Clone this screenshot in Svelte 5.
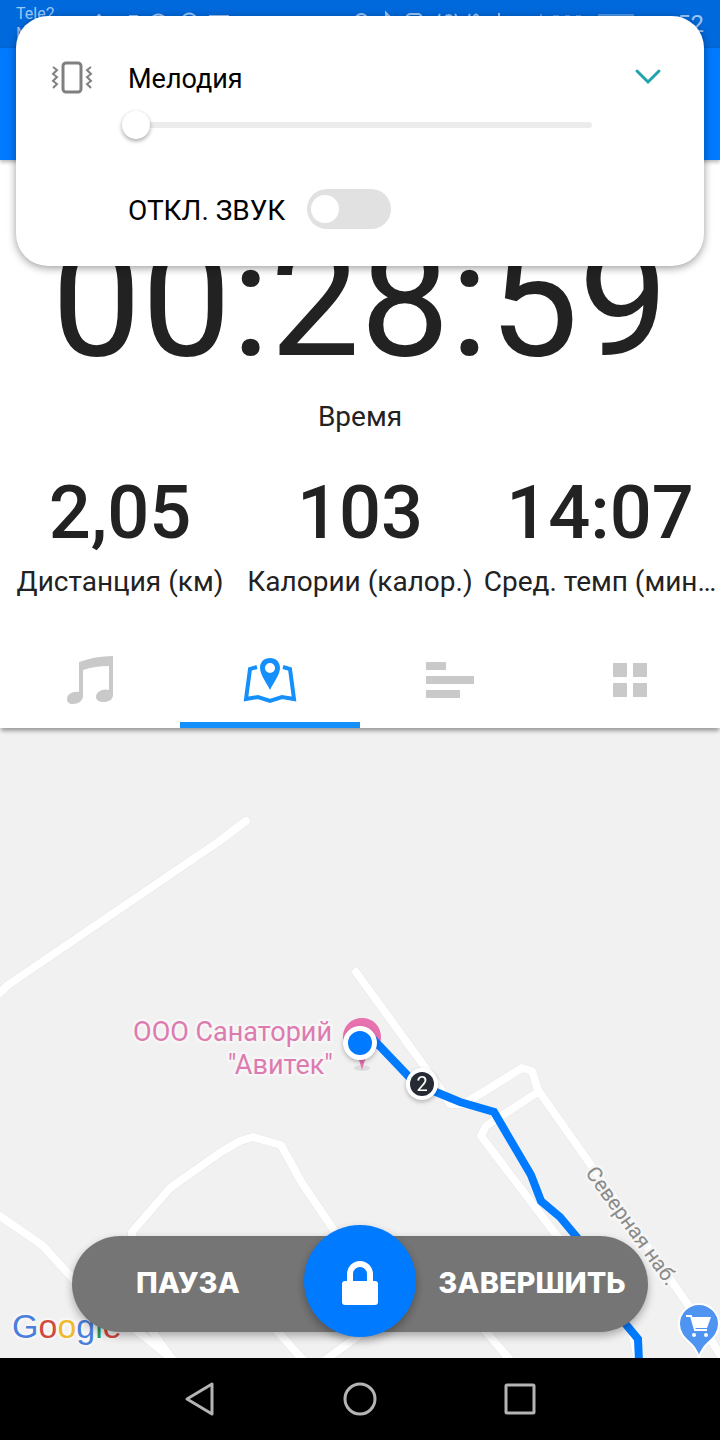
<script lang="ts">
  let volume = $state(0);
  let muted = $state(false);
  let activeTab = $state('map');

  const stats = [
    { value: '2,05', label: 'Дистанция (км)' },
    { value: '103', label: 'Калории (калор.)' },
    { value: '14:07', label: 'Сред. темп (мин…' }
  ];

  const tabs = [
    { id: 'music', name: 'Музыка' },
    { id: 'map', name: 'Карта' },
    { id: 'splits', name: 'Отрезки' },
    { id: 'more', name: 'Ещё' }
  ];

  const roads = [
    'M246 93 L218 114 L8 257 L-6 270',
    'M356 244 L440 360 L450 376 H464 L522 340 L532 343 L538 362 L612 467 L700 594 L726 636',
    'M538 364 L486 398 L481 408 L570 525 L632 604 L640 640',
    'M-6 484 L42 517 L76 554 L176 634',
    'M132 510 V504 L170 460 L221 424 L240 413 L253 409 L281 417 L302 455 L340 511',
    'M150 600 L174 634',
    'M278 604 L303 632 Q316 640 328 630 L358 608',
    'M486 604 L512 634'
  ];
  const route = 'M372 310 L412 352 L436 364 L460 374 L494 384 L531 447 L541 473 L560 489 L590 525 L624 594 L638 611 L639 634';
</script>

<div class="screen">
  <div class="status">
    <div class="carrier">Tele2<br />M</div>
    <svg class="peek" width="140" height="20" viewBox="0 0 140 20" aria-hidden="true">
      <path d="M5 17 L7 15 L9 17 M37 16 H46 M59 18 Q66 11 74 18 M90 18 Q97 9 105 18 M117 16 H137" />
    </svg>
    <svg class="peek right" width="284" height="20" viewBox="0 0 284 20" aria-hidden="true">
      <path d="M3 18 Q9 10 16 18 M34 19 V13 L39 18 M54 18 Q55 14 59 14 H66 Q69 14 70 18 M88 14 L85 19 M92 18 Q97 12 101 18 M103 14 L106 19 M118 14 L115 20 M121 18 Q124 11 127 18 M147 13 V18" />
      <path class="faint" d="M189 14 V18 M201 16 H207 M213 16 H218 M224 16 H229 M247 18 V15 H281 V18" />
    </svg>
    <div class="clock">52</div>
  </div>
  <header></header>

  <section class="timer">
    <div class="time">00:28:59</div>
    <div class="caption">Время</div>
  </section>

  <section class="stats">
    {#each stats as stat}
      <div class="stat">
        <div class="value">{stat.value}</div>
        <div class="label">{stat.label}</div>
      </div>
    {/each}
  </section>

  <nav class="tabs">
    {#each tabs as tab}
      <button
        class:active={activeTab === tab.id}
        aria-label={tab.name}
        onclick={() => (activeTab = tab.id)}
      >
        <svg width="60" height="60" viewBox="0 0 60 60" fill="currentColor">
          {#if tab.id === 'music'}
            <path d="M19 12 Q35 6 53 6 V45 C53 50 48 52 44 52 C39 52 36 50 36 47 C36 42 43 38 49 40 V16 Q35 16 23 20 V46 C23 51 18 54 13 54 C9 54 7 52 7 49 C7 44 13 41 19 42 Z" />
          {:else if tab.id === 'map'}
            <path
              d="M17 17 L10 19 L6 49 L18 47 L30 51 L42 47 L54 49 L50 19 L43 17"
              fill="none"
              stroke="currentColor"
              stroke-width="4"
            />
            <path
              fill-rule="evenodd"
              d="M30 8 C24 8 20 12 20 18 C20 25 28 35 30 40 C32 35 40 25 40 18 C40 12 36 8 30 8 Z M30 13 A5 5 0 1 1 30 23 A5 5 0 1 1 30 13 Z"
            />
          {:else if tab.id === 'splits'}
            <path d="M6 12 H26 V20 H6 Z M6 26 H54 V34 H6 Z M6 40 H40 V48 H6 Z" />
          {:else}
            <path d="M13 13 H27 V27 H13 Z M33 13 H47 V27 H33 Z M13 33 H27 V47 H13 Z M33 33 H47 V47 H33 Z" />
          {/if}
        </svg>
      </button>
    {/each}
  </nav>

  <main class="map">
    <svg class="canvas" viewBox="0 0 720 630" preserveAspectRatio="xMidYMid slice">
      <g class="roads edge">
        {#each roads as d}<path {d} />{/each}
      </g>
      <g class="roads">
        {#each roads as d}<path {d} />{/each}
      </g>
      <text class="street" transform="translate(626 502) rotate(54)">Северная наб.</text>

      <ellipse cx="362" cy="340" rx="8" ry="3" fill="#dcdcdc" />
      <path
        d="M362 290 C351 290 343 298 343 309 C343 321 353 325 358 330 Q360 334 362 342 Q364 334 366 330 C371 325 381 321 381 309 C381 298 373 290 362 290 Z"
        fill="#e872b0"
      />
      <text class="place" x="332" y="313">ООО Санаторий</text>
      <text class="place" x="333" y="346">"Авитек"</text>

      <path class="route" d={route} />
      <g class="marker">
        <circle cx="422" cy="356" r="16" fill="#fff" />
        <circle cx="422" cy="356" r="12" fill="#262a33" />
        <text x="422" y="363">2</text>
      </g>
      <g class="marker">
        <circle cx="360" cy="315" r="17" fill="#fff" />
        <circle cx="360" cy="315" r="12" fill="#007aff" />
      </g>

      <path
        d="M699 576 C688 576 679 585 679 596 C679 609 691 614 695 621 Q698 625 699 630 Q700 625 703 621 C707 614 719 609 719 596 C719 585 710 576 699 576 Z"
        fill="#4e94f0"
        stroke="#fff"
        stroke-width="2"
      />
      <path d="M686 588 H691 L695 602 H707" fill="none" stroke="#fff" stroke-width="2" />
      <path d="M691 589 H711 L707 600 H694 Z" fill="#fff" />
      <circle cx="694" cy="607" r="2" fill="#fff" />
      <circle cx="706" cy="607" r="2" fill="#fff" />
    </svg>

    <div class="google" aria-label="Google">
      <span class="b">G</span><span class="r">o</span><span class="y">o</span><span class="b">g</span><span
        class="g">l</span
      ><span class="r">e</span>
    </div>

    <div class="controls">
      <button>ПАУЗА</button>
      <button class="lock" aria-label="Заблокировать">
        <svg width="36" height="44" viewBox="0 0 36 44">
          <path d="M8 22 V13 A10 10 0 0 1 28 13 V22" fill="none" stroke="#fff" stroke-width="6" />
          <rect y="20" width="36" height="24" rx="3" fill="#fff" />
        </svg>
      </button>
      <button>ЗАВЕРШИТЬ</button>
    </div>
  </main>

  <footer>
    <button aria-label="Назад">
      <svg width="36" height="36" viewBox="0 0 36 36">
        <path d="M5 18 L30 3 V33 Z" />
      </svg>
    </button>
    <button aria-label="Домой">
      <svg width="36" height="36" viewBox="0 0 36 36">
        <circle cx="18" cy="18" r="15" />
      </svg>
    </button>
    <button aria-label="Недавние">
      <svg width="36" height="36" viewBox="0 0 36 36">
        <rect x="4" y="4" width="28" height="28" rx="1" />
      </svg>
    </button>
  </footer>

  <div class="volume">
    <svg class="vibrate" width="48" height="40" viewBox="0 0 48 40" aria-hidden="true">
      <rect x="15" y="5" width="18" height="29" rx="3" />
      <path d="M5 9 L9 12 L5 16 L9 19 L5 23 L9 26 L5 30 M43 9 L39 12 L43 16 L39 19 L43 23 L39 26 L43 30" />
    </svg>
    <div class="settings">
      <label class="title" for="ringtone">Мелодия</label>
      <input id="ringtone" class="slider" type="range" min="0" max="15" bind:value={volume} />
      <div class="mute">
        <label for="mute">ОТКЛ. ЗВУК</label>
        <input id="mute" type="checkbox" bind:checked={muted} />
      </div>
    </div>
    <button class="expand" aria-label="Развернуть">
      <svg width="32" height="40" viewBox="0 0 32 40">
        <path d="M5 13 L16 24 L27 13" />
      </svg>
    </button>
  </div>
</div>

<style>
  :global(body) {
    margin: 0;
  }

  .screen {
    position: relative;
    display: flex;
    flex-direction: column;
    min-height: 100vh;
    overflow: hidden;
    background: #fff;
    color: #222;
    font-family: Roboto, sans-serif;
  }

  button {
    display: flex;
    align-items: center;
    justify-content: center;
    padding: 0;
    border: 0;
    background: none;
    color: inherit;
    font: inherit;
    cursor: pointer;
  }

  .status {
    display: flex;
    box-sizing: border-box;
    height: 48px;
    padding: 4px 16px 0;
    background: #0069dc;
    color: #9cc6f5;
  }

  .carrier {
    width: 76px;
    font-size: 16px;
    line-height: 20px;
  }

  .peek {
    margin-top: -4px;
    fill: none;
    stroke: currentColor;
    stroke-width: 2;
  }

  .peek.right {
    margin-left: auto;
  }

  .faint {
    opacity: 0.5;
  }

  .clock {
    width: 68px;
    font-size: 24px;
    line-height: 40px;
    text-align: right;
  }

  header {
    height: 112px;
    background: #007aff;
    box-shadow: 0 2px 4px rgba(0, 0, 0, 0.3);
  }

  .timer {
    padding-top: 61px;
    text-align: center;
  }

  .time {
    font-size: 160px;
    line-height: 160px;
  }

  .caption {
    margin-top: 18px;
    font-size: 28px;
    line-height: 36px;
  }

  .stats {
    display: grid;
    grid-template-columns: repeat(3, minmax(0, 1fr));
    margin: 42px 0 32px;
    text-align: center;
  }

  .value {
    font-size: 74px;
    font-weight: 500;
    line-height: 72px;
  }

  .label {
    margin-top: 15px;
    overflow: hidden;
    font-size: 28px;
    line-height: 36px;
    text-overflow: ellipsis;
    white-space: nowrap;
  }

  .tabs {
    position: relative;
    z-index: 1;
    display: grid;
    grid-template-columns: repeat(4, 1fr);
    background: #fff;
    box-shadow: 0 4px 4px -1px rgba(0, 0, 0, 0.35);
  }

  .tabs button {
    height: 96px;
    color: #c9c9c9;
  }

  .tabs .active {
    color: #1590fb;
    box-shadow: inset 0 -6px #1590fb;
  }

  .map {
    position: relative;
    flex: 1;
    min-height: 630px;
    overflow: hidden;
    background: #f1f1f1;
  }

  .canvas {
    position: absolute;
    width: 100%;
    height: 100%;
  }

  .roads {
    fill: none;
    stroke: #fff;
    stroke-width: 8;
    stroke-linejoin: round;
    stroke-linecap: round;
  }

  .edge {
    stroke: #e6e6e6;
    stroke-width: 9;
  }

  .route {
    fill: none;
    stroke: #007aff;
    stroke-width: 8;
  }

  .street,
  .place {
    stroke: #f6f6f6;
    stroke-width: 5;
    stroke-linejoin: round;
    paint-order: stroke;
  }

  .street {
    fill: #8a8a8a;
    font-size: 21px;
    text-anchor: middle;
  }

  .place {
    fill: #dd7bb0;
    font-size: 27px;
    text-anchor: end;
  }

  .marker {
    filter: drop-shadow(0 2px 2px rgba(0, 0, 0, 0.25));
  }

  .marker text {
    fill: #fff;
    font-size: 20px;
    text-anchor: middle;
  }

  .google {
    position: absolute;
    bottom: 12px;
    left: 12px;
    font-family: 'Liberation Sans', sans-serif;
    font-size: 34px;
    line-height: 40px;
    text-shadow: 0 0 4px #fff, 0 0 4px #fff;
  }

  .b {
    color: #4a80dc;
  }

  .r {
    color: #d14a3e;
  }

  .y {
    color: #f0b92a;
  }

  .g {
    color: #2f9a4e;
  }

  .controls {
    position: absolute;
    right: 10%;
    bottom: 26px;
    left: 10%;
    display: grid;
    grid-template-columns: 1fr 112px 1fr;
    height: 96px;
    border-radius: 48px;
    background: #757575;
    box-shadow: 0 4px 8px rgba(0, 0, 0, 0.3);
    color: #fff;
    font-family: Inter, sans-serif;
    font-size: 29px;
    font-weight: 800;
  }

  .controls button {
    height: 92px;
  }

  .controls .lock {
    height: 112px;
    margin-top: -11px;
    padding-top: 4px;
    border-radius: 50%;
    background: #007aff;
    box-shadow: 0 4px 8px rgba(0, 0, 0, 0.3);
  }

  footer {
    display: flex;
    justify-content: center;
    gap: 64px;
    background: #000;
  }

  footer button {
    width: 96px;
    height: 82px;
  }

  footer svg {
    fill: none;
    stroke: #b4b4b4;
    stroke-width: 3;
    stroke-linejoin: round;
  }

  .volume {
    position: absolute;
    z-index: 2;
    top: 16px;
    right: 16px;
    left: 16px;
    display: flex;
    align-items: flex-start;
    box-sizing: border-box;
    height: 250px;
    padding: 42px 40px 0 32px;
    border-radius: 32px;
    background: #fff;
    box-shadow: 0 2px 8px rgba(0, 0, 0, 0.4);
    color: #000;
    font-size: 28px;
    line-height: 40px;
  }

  .vibrate {
    fill: none;
    stroke: #808080;
    stroke-width: 3;
  }

  .vibrate path {
    stroke-width: 2;
  }

  .settings {
    display: flex;
    flex: 1;
    flex-direction: column;
    padding: 0 40px 0 26px;
  }

  .settings label {
    padding-left: 6px;
  }

  .title {
    font-size: 27px;
    line-height: 42px;
  }

  .slider {
    width: 100%;
    height: 28px;
    margin: 11px 0 50px;
    appearance: none;
    background: none;
  }

  .slider::-webkit-slider-runnable-track {
    height: 6px;
    border-radius: 3px;
    background: #ececec;
  }

  .slider::-webkit-slider-thumb {
    width: 28px;
    height: 28px;
    margin-top: -11px;
    appearance: none;
    border-radius: 50%;
    background: #fff;
    box-shadow: 0 2px 4px rgba(0, 0, 0, 0.35);
  }

  .mute {
    display: flex;
    gap: 22px;
  }

  .mute label {
    line-height: 44px;
  }

  .mute input {
    display: flex;
    align-items: center;
    box-sizing: border-box;
    width: 84px;
    height: 40px;
    margin: 0;
    padding: 0 4px;
    appearance: none;
    border-radius: 20px;
    background: #e1e1e1;
  }

  .mute input::before {
    width: 28px;
    height: 28px;
    border-radius: 50%;
    background: #fff;
    content: '';
  }

  .mute input:checked {
    justify-content: flex-end;
    background: #1fa3ac;
  }

  .expand svg {
    fill: none;
    stroke: #1fa3ac;
    stroke-width: 3;
    stroke-linecap: round;
  }
</style>
